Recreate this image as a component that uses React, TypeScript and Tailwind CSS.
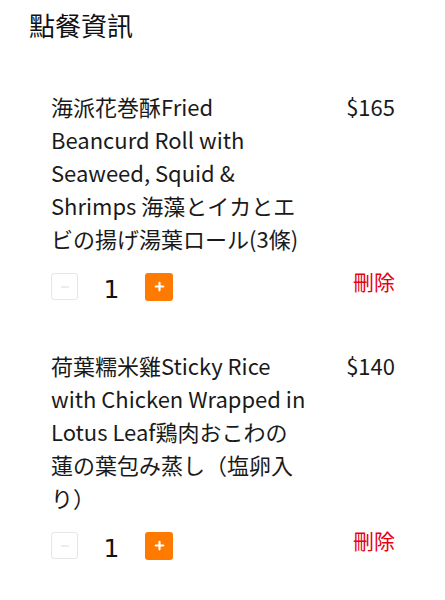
import { Minus, Plus } from 'lucide-react';

interface OrderItem {
  name: string;
  price: number;
  qty: number;
}

const items: OrderItem[] = [
  {
    name: '海派花巻酥Fried Beancurd Roll with Seaweed, Squid & Shrimps 海藻とイカとエビの揚げ湯葉ロール(3條)',
    price: 165,
    qty: 1,
  },
  {
    name: '荷葉糯米雞Sticky Rice with Chicken Wrapped in Lotus Leaf鶏肉おこわの蓮の葉包み蒸し（塩卵入り）',
    price: 140,
    qty: 1,
  },
];

const font = { fontFamily: '"Noto Sans CJK JP", sans-serif' };

function ItemRow({ item }: { item: OrderItem }) {
  return (
    <div className="pl-[22px]">
      <div className="flex justify-between items-start">
        <p className="w-[256px] text-[22px] leading-[33px] text-[#1a1a1a]">{item.name}</p>
        <span className="text-[22px] leading-[33px] text-[#1a1a1a]">${item.price}</span>
      </div>
      {/* qty controls */}
      <div className="mt-[16px] flex items-start justify-between">
        <div className="flex items-center">
          <button className="w-[27px] h-[27px] rounded-[3px] border border-[#e6e6e6] bg-white flex items-center justify-center">
            <Minus className="w-[12px] h-[12px] text-[#d9d9d9]" strokeWidth={2} />
          </button>
          <span
            className="w-[67px] text-center text-[25px] leading-none text-[#111] pt-[6px]"
            style={{ fontFamily: '"DejaVu Sans", sans-serif' }}
          >
            {item.qty}
          </span>
          <button className="w-[28px] h-[28px] rounded-[3px] bg-[#ff7a00] flex items-center justify-center">
            <Plus className="w-[13px] h-[13px] text-white" strokeWidth={4} />
          </button>
        </div>
        <span className="text-[21px] leading-[21px] text-[#e60012]">刪除</span>
      </div>
    </div>
  );
}

export default function App() {
  return (
    <div className="bg-white min-h-[600px] pl-[29px] pr-[50px] pt-[6px]" style={font}>
      <h1 className="text-[26px] leading-[38px] text-[#111] font-normal" style={{ fontFamily: '"Noto Sans CJK TC", sans-serif' }}>
        點餐資訊
      </h1>
      <div className="mt-[46px] flex flex-col gap-[47px]">
        {items.map((item, i) => (
          <ItemRow key={i} item={item} />
        ))}
      </div>
    </div>
  );
}
